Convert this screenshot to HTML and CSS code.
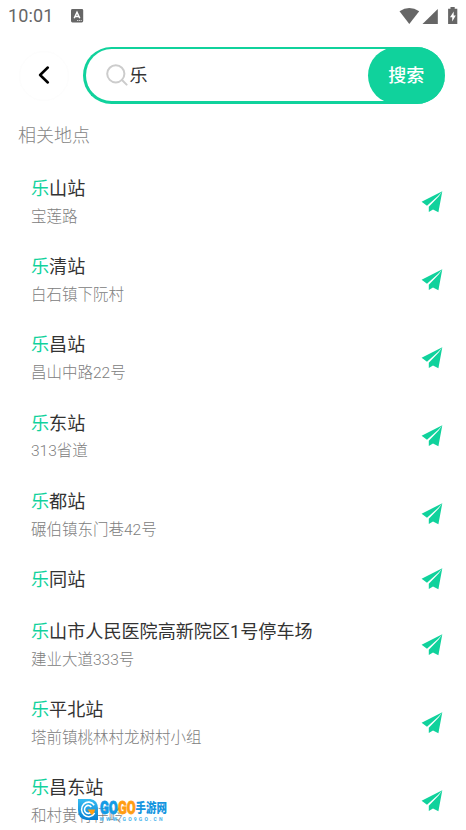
FILE: index.html
```html
<!DOCTYPE html>
<html lang="zh-CN">
<head>
<meta charset="utf-8">
<title>搜索</title>
<link rel="stylesheet" href="styles.css">
</head>
<body>
<svg class="defs" width="0" height="0">
  <symbol id="plane" viewBox="0 0 22 22">
    <path d="M21.3.3.6 10.7 6 14.8 17.2 4.8ZM21.3.3 17.4 21.2 12 18.6 7.8 21V15.7L17.7 5.5Z"/>
  </symbol>
</svg>
<div class="status">
  <span class="clock">10:01</span>
  <svg class="app" width="13" height="14" viewBox="0 0 13 14"><rect width="12.2" height="13.4" rx="1.4" fill="#666"/><path d="M3.2 9.3 6 3.2 8.8 9.3M4.3 7.4h3.5" fill="none" stroke="#fff" stroke-width="1.5"/><path d="M6 11.5h5" stroke="#fff" stroke-width=".7" stroke-dasharray="1.2 .6"/></svg>
  <svg class="signals" width="60" height="18" viewBox="0 0 60 18" fill="#666"><path d="M.5 4.2Q10.3-2 20.2 4.2L10.3 17Z"/><path d="M23.5 17H38.8V2Z"/><path d="M51.5 0h4.2v1.7h2.6V17h-9.2V1.7h2.4Z"/><path d="M54.7 4.5 51 10.2h2.2V14.5L56.8 8.5h-2.1Z" fill="#fff"/></svg>
</div>
<header class="top">
  <div class="back"><svg width="12" height="18" viewBox="0 0 12 18"><path d="M9.8 1.5 2.1 9l7.7 7.5" fill="none" stroke="#000" stroke-width="2.5" stroke-linecap="round" stroke-linejoin="round"/></svg></div>
  <div class="search">
    <svg class="glass" width="22" height="22" viewBox="0 0 22 22" fill="none" stroke="#ccc" stroke-width="2"><circle cx="9.8" cy="9.8" r="8.6"/><path d="m16 16 4.6 4.6" stroke-linecap="round"/></svg>
    <span class="query">乐</span>
    <div class="button">搜索</div>
  </div>
</header>
<h2 class="heading">相关地点</h2>
<ul class="list">
  <li class="row"><div><p class="title"><em>乐</em>山站</p><p class="sub">宝莲路</p></div><svg class="go"><use href="#plane"/></svg></li>
  <li class="row"><div><p class="title"><em>乐</em>清站</p><p class="sub">白石镇下阮村</p></div><svg class="go"><use href="#plane"/></svg></li>
  <li class="row"><div><p class="title"><em>乐</em>昌站</p><p class="sub">昌山中路22号</p></div><svg class="go"><use href="#plane"/></svg></li>
  <li class="row"><div><p class="title"><em>乐</em>东站</p><p class="sub">313省道</p></div><svg class="go"><use href="#plane"/></svg></li>
  <li class="row"><div><p class="title"><em>乐</em>都站</p><p class="sub">碾伯镇东门巷42号</p></div><svg class="go"><use href="#plane"/></svg></li>
  <li class="row"><div><p class="title"><em>乐</em>同站</p></div><svg class="go"><use href="#plane"/></svg></li>
  <li class="row"><div><p class="title"><em>乐</em>山市人民医院高新院区1号停车场</p><p class="sub">建业大道333号</p></div><svg class="go"><use href="#plane"/></svg></li>
  <li class="row"><div><p class="title"><em>乐</em>平北站</p><p class="sub">塔前镇桃林村龙树村小组</p></div><svg class="go"><use href="#plane"/></svg></li>
  <li class="row"><div><p class="title"><em>乐</em>昌东站</p><p class="sub">和村黄竹仔岭</p></div><svg class="go"><use href="#plane"/></svg></li>
</ul>
<div class="mark">
  <svg width="20" height="21" viewBox="0 0 21 21" preserveAspectRatio="none"><defs><linearGradient id="b" x2="0" y2="1"><stop stop-color="#35bdf2"/><stop offset="1" stop-color="#087fd2"/></linearGradient></defs><path d="M0 0H13Q21 1 21 10V21H9Q0 20 0 11Z" fill="url(#b)"/><path d="M17 6.2A7.3 7.3 0 1 0 17.4 14" fill="none" stroke="#fff" stroke-width="1.6"/><path d="M14 8A4 4 0 1 0 13.5 13.4" fill="none" stroke="#fff" stroke-width="1.6"/><path d="M10 10.5H18Q17.5 14.5 14.5 16Z" fill="#ff9d12"/></svg>
  <div class="words">
    <div class="brand"><b class="go1">GO</b><b class="go2">GO</b><b class="cn">手游网</b></div>
    <div class="url">WWW.GO9GO.CN</div>
  </div>
</div>
</body>
</html>
```
FILE: styles.css
```css
* { box-sizing: border-box; margin: 0; padding: 0; }
body {
  height: 830px;
  overflow: hidden;
  position: relative;
  background: #fff;
  color: #333;
  font-family: Roboto, "Noto Sans CJK SC", sans-serif;
}
.defs { position: absolute; }
.status { display: flex; align-items: center; height: 32px; padding: 0 8px; color: #666; }
.clock { width: 63px; font-size: 18px; letter-spacing: .15px; line-height: 32px; }
.signals { margin-left: auto; margin-right: -1px; margin-top: -1px; }
.top { display: flex; align-items: center; height: 57px; margin-top: 15px; padding-left: 19px; }
.back { display: flex; align-items: center; justify-content: center; width: 50px; height: 50px; border: 1px solid #fdfdfd; border-radius: 50%; }
.back svg { margin-top: -1px; }
.search { display: flex; align-items: center; width: 362px; height: 57px; margin-left: 14px; padding-left: 19.5px; border: 2px solid #10d29c; border-width: 2px 0 3px 3px; border-radius: 29px; }
.query { margin-top: 2px; margin-left: 2px; font-size: 18px; line-height: 26px; }
.button { width: 77.5px; height: 57px; margin: -2px 0 -3px auto; border-radius: 29px; background: #10d29c; color: #fff; font-size: 18px; font-weight: 500; line-height: 57px; text-align: center; }
.heading { margin-top: 18px; padding-left: 18px; height: 35px; color: #858585; font-size: 18px; font-weight: 300; line-height: 27px; }
.list { margin-top: 5.5px; list-style: none; }
.row { display: flex; align-items: center; justify-content: space-between; padding: 12.5px 23px 12.5px 31px; }
.title { height: 27.1px; font-size: 18.1px; line-height: 27px; white-space: nowrap; }
.title em { color: #10d29c; font-style: normal; }
.sub { height: 26.1px; padding-top: 1.8px; color: #808080; font-size: 15.5px; font-weight: 300; line-height: 26px; white-space: nowrap; }
.go { width: 22px; height: 22px; flex: none; fill: #10d29c; }
.mark { position: absolute; left: 78px; top: 799px; display: flex; gap: 1.5px; }
.words { width: 69px; }
.brand { display: flex; height: 16px; line-height: 18px; white-space: nowrap; }
.go1, .go2 { width: 18px; font: 900 18px/18px Roboto, sans-serif; letter-spacing: 0; transform: scaleX(.72); transform-origin: left; -webkit-text-stroke: .8px; }
.go1 { color: #129be5; }
.go2 { color: #ff9d12; }
.cn { color: #1595df; font-size: 10.5px; font-weight: 900; transform: scaleY(1.2); }
.url { margin-top: 1px; color: #48b4ec; font-size: 5px; font-weight: 700; letter-spacing: 2.2px; line-height: 6px; white-space: nowrap; }
```
